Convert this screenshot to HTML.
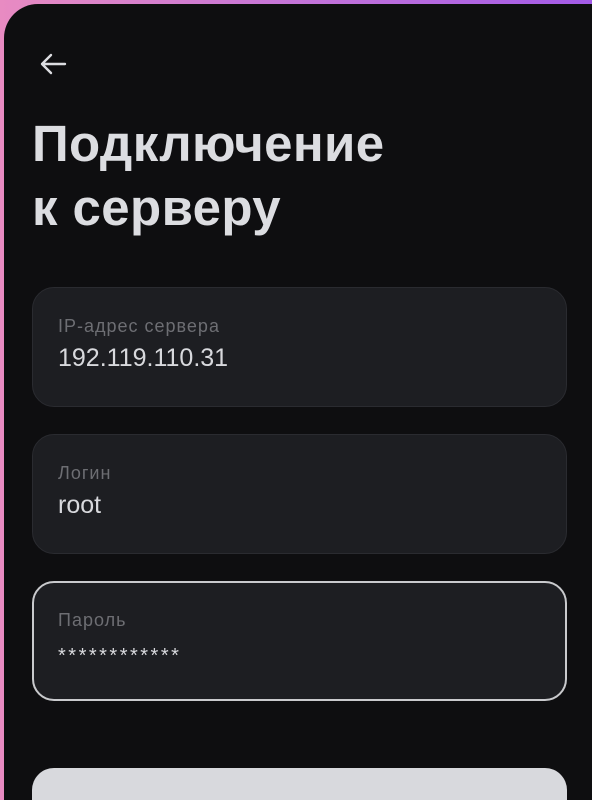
<!DOCTYPE html>
<html><head><meta charset="utf-8"><style>
html,body{margin:0;padding:0;width:592px;height:800px;overflow:hidden;}
body{background:linear-gradient(90deg,#e88bc2 0%,#c474d8 50%,#a35be8 100%);position:relative;font-family:"Liberation Sans","Noto Sans CJK SC",sans-serif;}
.panel{position:absolute;left:4px;top:4px;right:0;bottom:0;background:#0e0e10;border-radius:34px 0 0 0;}
.back{position:absolute;left:38px;top:50px;}
h1{position:absolute;left:32px;top:112px;margin:0;font-size:51px;line-height:64px;font-weight:bold;color:#dcdde1;letter-spacing:0.4px;}
.f{position:absolute;left:32px;width:533px;height:118px;background:#1d1e22;border:1px solid #2a2b30;border-radius:22px;}
.f .l{position:absolute;left:25px;top:28px;font-size:18px;letter-spacing:1px;color:#6d6e73;}
.f .v{position:absolute;left:25px;top:56px;font-size:25px;color:#d8d9dd;}
.f.a{border:2px solid #c9cacd;width:531px;height:116px;}
.btn{position:absolute;left:32px;top:768px;width:535px;height:32px;background:#d8d9dd;border-radius:22px 22px 0 0;}
</style></head><body>
<div class="panel"></div>
<svg class="back" width="30" height="30" viewBox="0 0 30 30"><path d="M27 14H4M13 5L4 14L13 23" fill="none" stroke="#dcdde1" stroke-width="2.4" stroke-linecap="round" stroke-linejoin="round"/></svg>
<h1>Подключение<br>к серверу</h1>
<div class="f" style="top:287px"><div class="l">IP-адрес сервера</div><div class="v">192.119.110.31</div></div>
<div class="f" style="top:434px"><div class="l">Логин</div><div class="v">root</div></div>
<div class="f a" style="top:581px"><div class="l" style="left:24px;top:27px">Пароль</div><div class="v" style="left:24px;top:62px;font-size:20px;letter-spacing:2.5px">************</div></div>
<div class="btn"></div>
</body></html>
